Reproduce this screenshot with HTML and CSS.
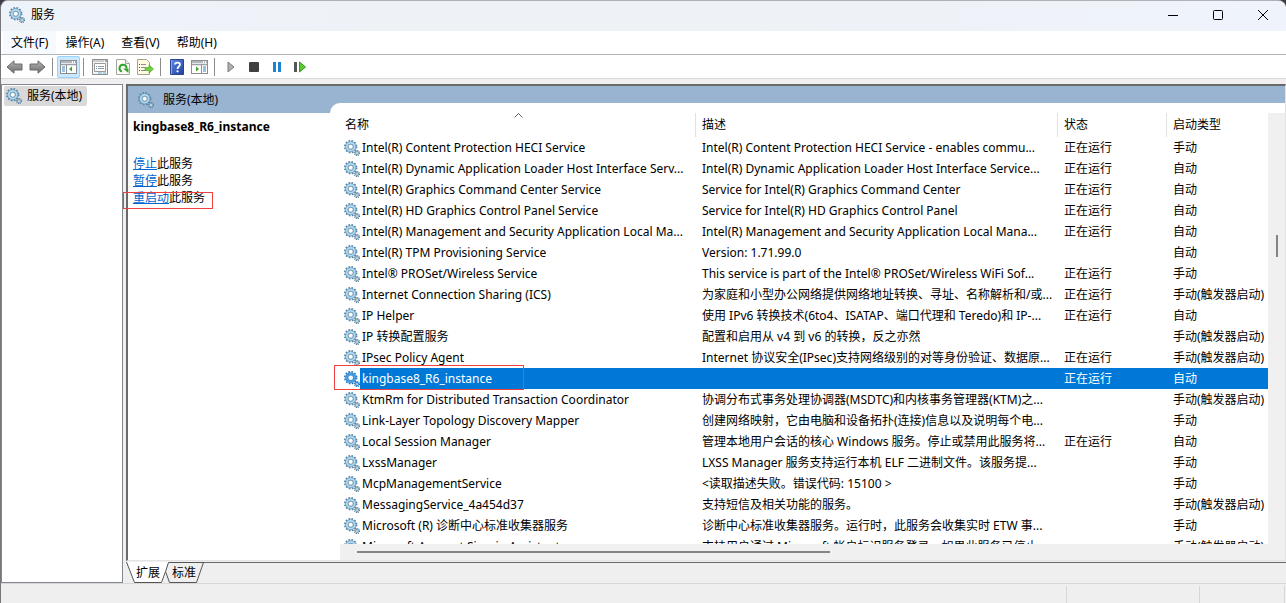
FILE: index.html
```
<!DOCTYPE html>
<html lang="zh-CN">
<head>
	<meta charset="UTF-8">
	<title>服务</title>
	<link rel="stylesheet" href="styles.css">
</head>
<body>
	<svg class="defs" width="0" height="0">
		<symbol id="gear" viewBox="0 0 16 16">
			<circle cx="6.7" cy="6.7" r="5.8" fill="none" stroke="#5584a6" stroke-width="1.8" stroke-dasharray="1.7 1.34"/>
			<circle cx="6.7" cy="6.7" r="4" fill="#fff" stroke="#6f9dbc" stroke-width="3"/>
			<circle cx="6.7" cy="6.7" r="3.9" fill="none" stroke="#b4daf2" stroke-width="1.7"/>
			<circle cx="6.7" cy="6.7" r="2.4" fill="none" stroke="#56809c" stroke-width=".6"/>
			<circle cx="13" cy="13" r="2.5" fill="none" stroke="#4f7592" stroke-width="1.1" stroke-dasharray="1.1 .86"/>
			<circle cx="13" cy="13" r="1.5" fill="#fff" stroke="#7fa3ba" stroke-width="1.3"/>
		</symbol>
		<symbol id="gearSel" viewBox="0 0 16 16">
			<circle cx="6.7" cy="6.7" r="5.9" fill="none" stroke="#1d74be" stroke-width="1.6" stroke-dasharray="1.7 1.39"/>
			<circle cx="6.7" cy="6.7" r="3.9" fill="#fff" stroke="#3c91d6" stroke-width="3.2"/>
			<circle cx="6.7" cy="6.7" r="3.9" fill="none" stroke="#7fbdea" stroke-width="1" stroke-dasharray="1 1"/>
			<circle cx="13" cy="13" r="2.5" fill="none" stroke="#1d6fb5" stroke-width="1.1" stroke-dasharray="1.1 .86"/>
			<circle cx="13" cy="13" r="1.5" fill="#fff" stroke="#3c8acb" stroke-width="1.3"/>
		</symbol>
		<linearGradient id="gray" x1="0" y1="0" x2="0" y2="1">
			<stop offset="0" stop-color="#b4b4b4"/>
			<stop offset="1" stop-color="#6c6c6c"/>
		</linearGradient>
		<linearGradient id="blue" x1="0" y1="0" x2="1" y2="1">
			<stop offset="0" stop-color="#5f8ae6"/>
			<stop offset="1" stop-color="#1f3f9f"/>
		</linearGradient>
	</svg>

	<div class="window">
		<div class="titlebar">
			<svg class="ico"><use href="#gear"/></svg>
			<span class="title">服务</span>
			<button class="cap" aria-label="最小化"><svg width="12" height="12"><path d="M1 6.500h10" stroke="#000"/></svg></button>
			<button class="cap" aria-label="最大化"><svg width="12" height="12"><rect x="1.500" y="1.500" width="9" height="9" rx="1" fill="none" stroke="#000"/></svg></button>
			<button class="cap" aria-label="关闭"><svg width="12" height="12"><path d="M1 1l10 10M11 1L1 11" stroke="#000"/></svg></button>
		</div>

		<div class="menu">
			<button class="on">文件(F)</button>
			<button>操作(A)</button>
			<button>查看(V)</button>
			<button>帮助(H)</button>
		</div>

		<div class="toolbar">
			<button aria-label="后退"><svg width="17" height="16"><path d="M1 8L8 1.800V5h8v6H8v3.200z" fill="url(#gray)" stroke="#6a6a6a"/></svg></button>
			<button aria-label="前进"><svg width="17" height="16"><path d="M16 8L9 1.800V5H1v6h8v3.200z" fill="url(#gray)" stroke="#6a6a6a"/></svg></button>
			<i class="sep"></i>
			<button class="on" aria-label="显示/隐藏控制台树">
				<svg width="17" height="16">
					<rect x=".5" y="1.500" width="16" height="13" fill="#fff" stroke="#8a8f94"/>
					<path d="M1 3h11M1 5.500h15" stroke="#9aa0a6" stroke-width="1.400"/>
					<path d="M13 3h1M15 3h1" stroke="#55606a"/>
					<path d="M6.500 6v8" stroke="#8a8f94"/>
					<path d="M2 8h3M2 10h3M2 12h3" stroke="#3f7fc0"/>
					<path d="M12 7.500v5L9 10z" fill="#35a52c"/>
				</svg>
			</button>
			<i class="sep"></i>
			<button aria-label="属性">
				<svg width="16" height="16">
					<path d="M.5.5h15v15H.5z" fill="#f4f4f4" stroke="#8d8d8d"/>
					<path d="M1 2h11" stroke="#a8a8a8"/><path d="M13 2h2" stroke="#555"/>
					<path d="M2.500 4.500h11v8h-11z" fill="#fff" stroke="#9a9a9a"/>
					<path d="M4 7.500h1M4 9.500h1" stroke="#5a8fc0"/><path d="M6 7.500h6M6 9.500h6" stroke="#999"/>
					<path d="M6 14h4M11 14h3" stroke="#58b4d8"/>
				</svg>
			</button>
			<button aria-label="刷新">
				<svg width="16" height="16">
					<path d="M1.500.5h9l4 4v11h-13z" fill="#fffdf4" stroke="#a4a4a4"/>
					<path d="M10.500.5v4h4" fill="#eee" stroke="#a4a4a4"/>
					<path d="M7 12.600A3.500 3.500 0 1 1 11.500 9.500" fill="none" stroke="#2fa32c" stroke-width="2"/>
					<path d="M8 9.500h5.500v4.500z" fill="#2fa32c"/>
				</svg>
			</button>
			<button aria-label="导出列表">
				<svg width="17" height="16">
					<path d="M.5.5h9l3 3v12H.5z" fill="#fffbe2" stroke="#a9a488"/>
					<path d="M2 5.500h1M2 8.500h1M2 11.500h1" stroke="#555"/>
					<path d="M4 5.500h5M4 8.500h4M4 11.500h5" stroke="#9888a0"/>
					<path d="M8 8.500h4V5.800l4.500 4.200-4.500 4.200v-2.700H8z" fill="#6fce3e" stroke="#45a223" stroke-width=".6"/>
				</svg>
			</button>
			<i class="sep"></i>
			<button aria-label="帮助">
				<svg width="14" height="16">
					<path d="M.5.5h13v15H.5z" fill="url(#blue)" stroke="#2b4490"/>
					<path d="M1.500 1v14" stroke="#8fa9e6"/>
					<path d="M5 5.500C5 3 10 3 10 5.500 10 7.500 7.500 7.500 7.500 10" fill="none" stroke="#fff" stroke-width="1.800"/>
					<circle cx="7.500" cy="12.300" r="1.100" fill="#fff"/>
				</svg>
			</button>
			<button aria-label="显示/隐藏操作窗格">
				<svg width="17" height="16">
					<rect x=".5" y="1.500" width="16" height="13" fill="#fff" stroke="#8a8f94"/>
					<path d="M1 3h11M1 5.500h15" stroke="#9aa0a6" stroke-width="1.400"/>
					<path d="M13 3h1M15 3h1" stroke="#55606a"/>
					<path d="M10.500 6v8" stroke="#8a8f94"/>
					<path d="M12 8h3M12 10h3M12 12h3" stroke="#3f7fc0"/>
					<path d="M5 7.500v5L8 10z" fill="#35a52c"/>
				</svg>
			</button>
			<i class="sep"></i>
			<button aria-label="启动服务"><svg width="10" height="12"><path d="M2 1l6 5-6 5z" fill="#b0b0b0" stroke="#7b7b7b"/></svg></button>
			<button aria-label="停止服务"><svg width="10" height="10"><rect width="10" height="10" rx="1" fill="#404040"/></svg></button>
			<button aria-label="暂停服务"><svg width="10" height="10"><path d="M1 0h3v10H1zM6 0h3v10H6z" fill="#1c83cf"/></svg></button>
			<button aria-label="重启动服务"><svg width="12" height="12"><path d="M0 1h3v10H0z" fill="#555"/><path d="M5.500 1l6 5-6 5z" fill="#5ccb35" stroke="#2e9a1c"/></svg></button>
		</div>

		<div class="main">
			<div class="tree">
				<div class="node"><svg class="ico"><use href="#gear"/></svg><span>服务(本地)</span></div>
			</div>

			<div class="right">
				<div class="pane">
					<div class="banner"><svg class="ico"><use href="#gear"/></svg><span>服务(本地)</span></div>
					<div class="content">
						<div class="info">
							<h1>kingbase8_R6_instance</h1>
							<p><a href="#">停止</a>此服务</p>
							<p><a href="#">暂停</a>此服务</p>
							<p class="marked"><a href="#">重启动</a>此服务</p>
						</div>
						<div class="list">
							<div class="view">
								<div class="rows">
									<table>
										<colgroup>
											<col class="c1"><col><col class="c3"><col class="c4">
										</colgroup>
										<thead>
											<tr>
												<th>名称<svg class="sort" width="9" height="5"><path d="M.5 4.500l4-4 4 4" fill="none" stroke="#666"/></svg></th>
												<th>描述</th>
												<th>状态</th>
												<th>启动类型</th>
											</tr>
										</thead>
										<tbody>
											<tr><td><svg class="ico"><use href="#gear"/></svg><span>Intel(R) Content Protection HECI Service</span></td><td>Intel(R) Content Protection HECI Service - enables commu...</td><td>正在运行</td><td>手动</td></tr>
											<tr><td><svg class="ico"><use href="#gear"/></svg><span>Intel(R) Dynamic Application Loader Host Interface Serv...</span></td><td>Intel(R) Dynamic Application Loader Host Interface Service...</td><td>正在运行</td><td>自动</td></tr>
											<tr><td><svg class="ico"><use href="#gear"/></svg><span>Intel(R) Graphics Command Center Service</span></td><td>Service for Intel(R) Graphics Command Center</td><td>正在运行</td><td>自动</td></tr>
											<tr><td><svg class="ico"><use href="#gear"/></svg><span>Intel(R) HD Graphics Control Panel Service</span></td><td>Service for Intel(R) HD Graphics Control Panel</td><td>正在运行</td><td>自动</td></tr>
											<tr><td><svg class="ico"><use href="#gear"/></svg><span>Intel(R) Management and Security Application Local Ma...</span></td><td>Intel(R) Management and Security Application Local Mana...</td><td>正在运行</td><td>自动</td></tr>
											<tr><td><svg class="ico"><use href="#gear"/></svg><span>Intel(R) TPM Provisioning Service</span></td><td>Version: 1.71.99.0</td><td></td><td>自动</td></tr>
											<tr><td><svg class="ico"><use href="#gear"/></svg><span>Intel® PROSet/Wireless Service</span></td><td>This service is part of the Intel® PROSet/Wireless WiFi Sof...</td><td>正在运行</td><td>手动</td></tr>
											<tr><td><svg class="ico"><use href="#gear"/></svg><span>Internet Connection Sharing (ICS)</span></td><td>为家庭和小型办公网络提供网络地址转换、寻址、名称解析和/或...</td><td>正在运行</td><td>手动(触发器启动)</td></tr>
											<tr><td><svg class="ico"><use href="#gear"/></svg><span>IP Helper</span></td><td>使用 IPv6 转换技术(6to4、ISATAP、端口代理和 Teredo)和 IP-...</td><td>正在运行</td><td>自动</td></tr>
											<tr><td><svg class="ico"><use href="#gear"/></svg><span>IP 转换配置服务</span></td><td>配置和启用从 v4 到 v6 的转换，反之亦然</td><td></td><td>手动(触发器启动)</td></tr>
											<tr><td><svg class="ico"><use href="#gear"/></svg><span>IPsec Policy Agent</span></td><td>Internet 协议安全(IPsec)支持网络级别的对等身份验证、数据原...</td><td>正在运行</td><td>手动(触发器启动)</td></tr>
											<tr class="sel"><td><svg class="ico"><use href="#gearSel"/></svg><span>kingbase8_R6_instance</span></td><td></td><td>正在运行</td><td>自动</td></tr>
											<tr><td><svg class="ico"><use href="#gear"/></svg><span>KtmRm for Distributed Transaction Coordinator</span></td><td>协调分布式事务处理协调器(MSDTC)和内核事务管理器(KTM)之...</td><td></td><td>手动(触发器启动)</td></tr>
											<tr><td><svg class="ico"><use href="#gear"/></svg><span>Link-Layer Topology Discovery Mapper</span></td><td>创建网络映射，它由电脑和设备拓扑(连接)信息以及说明每个电...</td><td></td><td>手动</td></tr>
											<tr><td><svg class="ico"><use href="#gear"/></svg><span>Local Session Manager</span></td><td>管理本地用户会话的核心 Windows 服务。停止或禁用此服务将...</td><td>正在运行</td><td>自动</td></tr>
											<tr><td><svg class="ico"><use href="#gear"/></svg><span>LxssManager</span></td><td>LXSS Manager 服务支持运行本机 ELF 二进制文件。该服务提...</td><td></td><td>手动</td></tr>
											<tr><td><svg class="ico"><use href="#gear"/></svg><span>McpManagementService</span></td><td>&lt;读取描述失败。错误代码: 15100 &gt;</td><td></td><td>手动</td></tr>
											<tr><td><svg class="ico"><use href="#gear"/></svg><span>MessagingService_4a454d37</span></td><td>支持短信及相关功能的服务。</td><td></td><td>手动(触发器启动)</td></tr>
											<tr><td><svg class="ico"><use href="#gear"/></svg><span>Microsoft (R) 诊断中心标准收集器服务</span></td><td>诊断中心标准收集器服务。运行时，此服务会收集实时 ETW 事...</td><td></td><td>手动</td></tr>
											<tr><td><svg class="ico"><use href="#gear"/></svg><span>Microsoft Account Sign-in Assistant</span></td><td>支持用户通过 Microsoft 帐户标识服务登录。如果此服务已停止...</td><td></td><td>手动(触发器启动)</td></tr>
										</tbody>
									</table>
								</div>
								<div class="vbar"><i></i></div>
							</div>
							<div class="hbar"><i></i></div>
						</div>
					</div>
				</div>
				<div class="tabs">
					<svg width="78" height="21">
						<path d="M0 0l9 20.500h27L45 0z" fill="#fff"/>
						<path d="M.5 0l8 20.500h27l4-11" fill="none" stroke="#555"/>
						<path d="M78 .5H42.500l-3 9 4 11h27l7-20" fill="#efefef" stroke="#555"/>
					</svg>
					<button>扩展</button><button>标准</button>
				</div>
			</div>
		</div>

		<div class="status"><span></span><span></span><span></span></div>
	</div>
</body>
</html>
```
FILE: styles.css
```
*,:after{
	box-sizing:border-box;
}
body{
	margin:0;
	background:#3c3c44;
	color:#000;
	font:12px/20px "Noto Sans","Noto Sans CJK SC",sans-serif;
}
button{
	margin:0;
	padding:0;
	border:0;
	background:none;
	font:inherit;
	color:inherit;
}
svg{
	display:block;
}
.defs{
	position:absolute;
}
.ico{
	width:16px;
	height:16px;
	flex:none;
}
.window{
	display:flex;
	flex-direction:column;
	height:100vh;
	border-top:1px solid #b0b0b4;
	border-left:1px solid #77777d;
	border-radius:8px 8px 0 0;
	overflow:hidden;
	background:#efefef;
}

/* 标题栏 */
.titlebar{
	display:flex;
	align-items:center;
	height:30px;
	flex:none;
	padding:0 1px 2px 8px;
	background:linear-gradient(90deg,#eef3fa,#eef2f6 50%,#eff3fb);
}
.title{
	flex:1;
	margin-left:6px;
}
.cap{
	display:flex;
	align-items:center;
	justify-content:center;
	width:45px;
	height:28px;
}

/* 菜单和工具栏 */
.menu{
	display:flex;
	flex:none;
	height:24px;
	gap:1px;
	padding-left:2px;
	background:#fff;
	border-bottom:1px solid #b3b3b3;
}
.menu button{
	padding:0 8px;
}
.menu .on{
	background:#f6faff;
}
.toolbar{
	display:flex;
	align-items:center;
	flex:none;
	height:24px;
	padding:1px 0 0 2px;
	background:#fff;
	border-bottom:1px solid #dadada;
}
.toolbar button{
	display:flex;
	align-items:center;
	justify-content:center;
	width:23px;
	height:22px;
}
.toolbar .on{
	background:#cce8ff;
	border:1px solid #99d1ff;
	border-radius:2px;
}
.sep{
	width:1px;
	height:18px;
	margin:0 4px 0 3px;
	background:#8c8c8c;
}

/* 主体 */
.main{
	display:flex;
	flex:1;
	min-height:0;
	gap:3px;
	padding-top:5px;
}
.tree{
	width:122px;
	flex:none;
	padding:1px 2px;
	background:#fff;
	border:1px solid #828790;
}
.node{
	display:flex;
	align-items:center;
	width:83px;
	height:20px;
	padding-left:2px;
	gap:5px;
	white-space:nowrap;
	background:#d9d9d9;
	border-radius:2px;
}
.right{
	display:flex;
	flex-direction:column;
	flex:1;
	min-width:0;
}
.pane{
	display:flex;
	flex-direction:column;
	flex:1;
	min-height:0;
	background:#fff;
	border:2px solid #696969;
	border-width:2px 1px 1px 2px;
	border-right-color:#e3e3e3;
	border-bottom-color:#e3e3e3;
}
.banner{
	display:flex;
	align-items:center;
	flex:none;
	height:27px;
	padding-left:10px;
	gap:9px;
	background:#99b4d1;
}
.content{
	display:flex;
	flex:1;
	min-height:0;
}
.info{
	width:202px;
	flex:none;
	padding:4px 0 0 5px;
}
h1{
	margin:0 0 18px;
	font-size:12px;
	line-height:20px;
}
p{
	margin:0;
	line-height:17px;
}
a{
	color:#0066cc;
}
.marked{
	position:relative;
}
.marked:after{
	content:"";
	position:absolute;
	left:-10px;
	top:3px;
	width:90px;
	height:17px;
	border:1px solid #f04040;
}

/* 服务列表 */
.list{
	display:flex;
	flex-direction:column;
	flex:1;
	min-width:0;
	margin-top:-10px;
	padding-top:10px;
	background:#fff;
	border-top-left-radius:10px;
}
.view{
	display:flex;
	flex:1;
	min-height:0;
}
.rows{
	flex:1;
	min-width:0;
	padding-left:10px;
	overflow:hidden;
}
table{
	width:100%;
	table-layout:fixed;
	border-collapse:separate;
	border-spacing:0;
}
.c1{
	width:356px;
}
.c3{
	width:109px;
}
.c4{
	width:101px;
}
th{
	position:relative;
	height:24px;
	padding:0 0 0 6px;
	font-weight:normal;
	text-align:left;
	border-right:1px solid #e2e2e2;
}
th:first-child{
	padding-left:5px;
}
th:last-child{
	border-right:0;
}
.sort{
	position:absolute;
	top:0;
	left:49%;
}
td{
	height:21px;
	padding:0 0 0 6px;
	line-height:21px;
	white-space:nowrap;
}
td:first-child{
	padding-left:4px;
}
td .ico{
	float:left;
	margin-top:3px;
}
td span{
	display:block;
	margin-left:16px;
	padding-left:2px;
}
.sel td{
	color:#fff;
	background:#0078d7;
}
.sel td:first-child{
	position:relative;
	background:none;
}
.sel span{
	background:#0078d7;
}
.sel td:first-child:after{
	content:"";
	position:absolute;
	left:-6px;
	top:-3px;
	width:190px;
	height:25px;
	border:1px solid #f04040;
}
.vbar{
	width:17px;
	background:#f0f0f0;
}
.vbar i{
	display:block;
	width:2px;
	height:22px;
	margin:122px 0 0 8px;
	background:#858585;
}
.hbar{
	flex:none;
	height:16px;
	margin-left:10px;
	padding:7px 0 0 17px;
	background:#f0f0f0;
}
.hbar i{
	display:block;
	width:51%;
	height:2px;
	background:#858585;
}

/* 底部标签 */
.tabs{
	position:relative;
	display:flex;
	flex:none;
	height:22px;
	padding:1px 0 0 10px;
	gap:12px;
	background:linear-gradient(#696969,#696969) 76px 1px/100% 1px no-repeat;
}
.tabs svg{
	position:absolute;
	left:0;
	top:1px;
}
.tabs button{
	position:relative;
}
.status{
	display:flex;
	justify-content:flex-end;
	flex:none;
	height:20px;
	padding-top:2px;
	border-top:1px solid #d7d7d7;
}
.status span{
	width:133px;
	border-left:1px solid #d7d7d7;
}
.status span:last-child{
	width:2px;
}
.status span:nth-child(2){
	width:85px;
}
```
